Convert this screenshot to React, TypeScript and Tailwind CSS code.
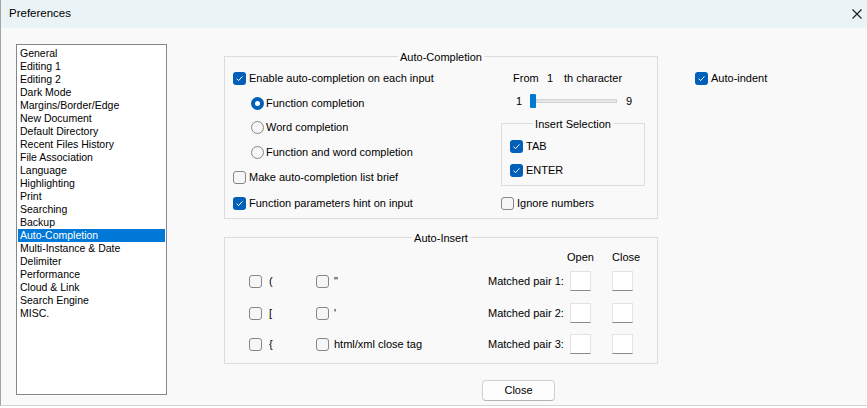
import React from "react";

function Check({ on }: { on?: boolean }) {
  if (on) {
    return (
      <span className="w-[13px] h-[13px] rounded-[3px] bg-[#005fb8] flex items-center justify-center shrink-0">
        <svg width="9" height="9" viewBox="0 0 9 9">
          <path d="M1.6 4.7 L3.6 6.6 L7.4 2.4" fill="none" stroke="#ffffff" strokeWidth="1" />
        </svg>
      </span>
    );
  }
  return <span className="w-[13px] h-[13px] rounded-[3px] border border-[#878787] bg-[#f6f6f6] shrink-0" />;
}

function Radio({ on }: { on?: boolean }) {
  if (on) {
    return (
      <span className="w-[13px] h-[13px] rounded-full bg-[#005fb8] flex items-center justify-center shrink-0">
        <span className="w-[5px] h-[5px] rounded-full bg-white" />
      </span>
    );
  }
  return <span className="w-[13px] h-[13px] rounded-full border border-[#878787] bg-[#f6f6f6] shrink-0" />;
}

function GroupTitle({ text }: { text: string }) {
  return (
    <span className="absolute left-1/2 -translate-x-1/2 top-[-7px] px-[2px] leading-[14px] bg-[#f9f9f9] whitespace-nowrap">
      {text}
    </span>
  );
}

function PairBox() {
  return <div className="w-[21px] h-[20px] bg-white border border-[#e3e3e3] border-b-[#8a8a8a]" />;
}

export default function App() {
  const pages = [
    "General",
    "Editing 1",
    "Editing 2",
    "Dark Mode",
    "Margins/Border/Edge",
    "New Document",
    "Default Directory",
    "Recent Files History",
    "File Association",
    "Language",
    "Highlighting",
    "Print",
    "Searching",
    "Backup",
    "Auto-Completion",
    "Multi-Instance & Date",
    "Delimiter",
    "Performance",
    "Cloud & Link",
    "Search Engine",
    "MISC.",
  ];

  const pairs = [
    { a: "(", b: '"', n: 1 },
    { a: "[", b: "'", n: 2 },
    { a: "{", b: "html/xml close tag", n: 3 },
  ];

  return (
    <div className="w-[867px] h-[408px] bg-white font-['Liberation_Sans',Arial,sans-serif] text-[11px] text-black">
      <div className="h-[406px] border-l border-b border-l-[#a3a3a3] border-b-[#d4d4d4] bg-[#f9f9f9] flex flex-col">
        {/* Title bar */}
        <div className="h-[28px] bg-[#eaf3f6] flex items-center justify-between pl-[8px] pr-[5px] shrink-0">
          <span className="text-[11.5px]">Preferences</span>
          <svg width="10" height="10" viewBox="0 0 10 10">
            <path d="M0.5 0.5 L9.5 9.5 M9.5 0.5 L0.5 9.5" stroke="#1a1a1a" strokeWidth="1.1" />
          </svg>
        </div>

        <div className="flex pt-[16px] pl-[15px]">
          {/* Page list */}
          <div className="w-[151px] h-[351px] bg-white border border-[#828790] pt-[2px] px-[1px] text-[10.5px] shrink-0">
            {pages.map((p) => (
              <div
                key={p}
                className={
                  p === "Auto-Completion"
                    ? "h-[13px] leading-[13px] pl-[2px] bg-[#0078d7] text-white"
                    : "h-[13px] leading-[13px] pl-[2px]"
                }
              >
                {p}
              </div>
            ))}
          </div>

          <div className="ml-[57px] flex flex-col">
            <div className="flex">
              <div className="flex flex-col mt-[12px]">
                {/* Auto-Completion group */}
                <div className="relative w-[434px] h-[163px] border border-[#dcdcdc] flex pt-[9px] pl-[8px]">
                  <GroupTitle text="Auto-Completion" />
                  <div className="w-[268px] flex flex-col">
                    <div className="h-[25px] flex items-center gap-[3px]">
                      <Check on />
                      <span>Enable auto-completion on each input</span>
                    </div>
                    <div className="h-[24px] flex items-center gap-[2px] pl-[18px]">
                      <Radio on />
                      <span>Function completion</span>
                    </div>
                    <div className="h-[25px] flex items-center gap-[2px] pl-[18px]">
                      <Radio />
                      <span>Word completion</span>
                    </div>
                    <div className="h-[24px] flex items-center gap-[2px] pl-[18px]">
                      <Radio />
                      <span>Function and word completion</span>
                    </div>
                    <div className="h-[26px] flex items-center gap-[3px]">
                      <Check />
                      <span>Make auto-completion list brief</span>
                    </div>
                    <div className="h-[27px] flex items-center gap-[3px]">
                      <Check on />
                      <span>Function parameters hint on input</span>
                    </div>
                  </div>

                  <div className="w-[144px] flex flex-col">
                    <div className="h-[25px] flex items-center pl-[12px]">
                      <span className="w-[34px]">From</span>
                      <span className="w-[17px]">1</span>
                      <span>th character</span>
                    </div>
                    <div className="h-[20px] flex items-center pl-[15px]">
                      <span className="w-[14px]">1</span>
                      <div className="w-[87px] flex items-center">
                        <div className="w-[6px] h-[14px] bg-[#0078d4] rounded-[1px]" />
                        <div className="flex-1 h-[4px] bg-[#e6e6e6] border border-[#d3d3d3]" />
                      </div>
                      <span className="ml-[9px]">9</span>
                    </div>
                    <div className="relative mt-[12px] w-[144px] h-[63px] border border-[#dcdcdc] pt-[10px] pl-[8px]">
                      <GroupTitle text="Insert Selection" />
                      <div className="h-[24px] flex items-center gap-[3px]">
                        <Check on />
                        <span>TAB</span>
                      </div>
                      <div className="h-[24px] flex items-center gap-[3px]">
                        <Check on />
                        <span>ENTER</span>
                      </div>
                    </div>
                    <div className="mt-[4px] h-[26px] flex items-center gap-[3px]">
                      <Check />
                      <span>Ignore numbers</span>
                    </div>
                  </div>
                </div>

                {/* Auto-Insert group */}
                <div className="relative mt-[18px] w-[434px] h-[127px] border border-[#dcdcdc] pt-[9px] pl-[24px] flex flex-col">
                  <GroupTitle text="Auto-Insert" />
                  <div className="h-[20px] flex items-center pl-[318px]">
                    <span className="w-[45px]">Open</span>
                    <span>Close</span>
                  </div>
                  {pairs.map((r, i) => (
                    <div
                      key={r.n}
                      className={
                        i === 0
                          ? "mt-[4px] h-[20px] flex items-center"
                          : i === 1
                          ? "mt-[12px] h-[20px] flex items-center"
                          : "mt-[11px] h-[20px] flex items-center"
                      }
                    >
                      <div className="w-[67px] flex items-center gap-[7px]">
                        <Check />
                        <span>{r.a}</span>
                      </div>
                      <div className="w-[172px] flex items-center gap-[5px]">
                        <Check />
                        <span>{r.b}</span>
                      </div>
                      <span className="w-[82px]">Matched pair {r.n}:</span>
                      <PairBox />
                      <div className="w-[21px]" />
                      <PairBox />
                    </div>
                  ))}
                </div>
              </div>

              <div className="ml-[37px] mt-[22px] h-[25px] flex items-center gap-[3px]">
                <Check on />
                <span>Auto-indent</span>
              </div>
            </div>

            <button className="mt-[16px] ml-[258px] w-[73px] h-[21px] rounded-[4px] border border-[#d0d0d0] border-b-[#b5b5b5] bg-[#fdfdfd] text-[11px] flex items-center justify-center">
              Close
            </button>
          </div>
        </div>
      </div>
    </div>
  );
}
